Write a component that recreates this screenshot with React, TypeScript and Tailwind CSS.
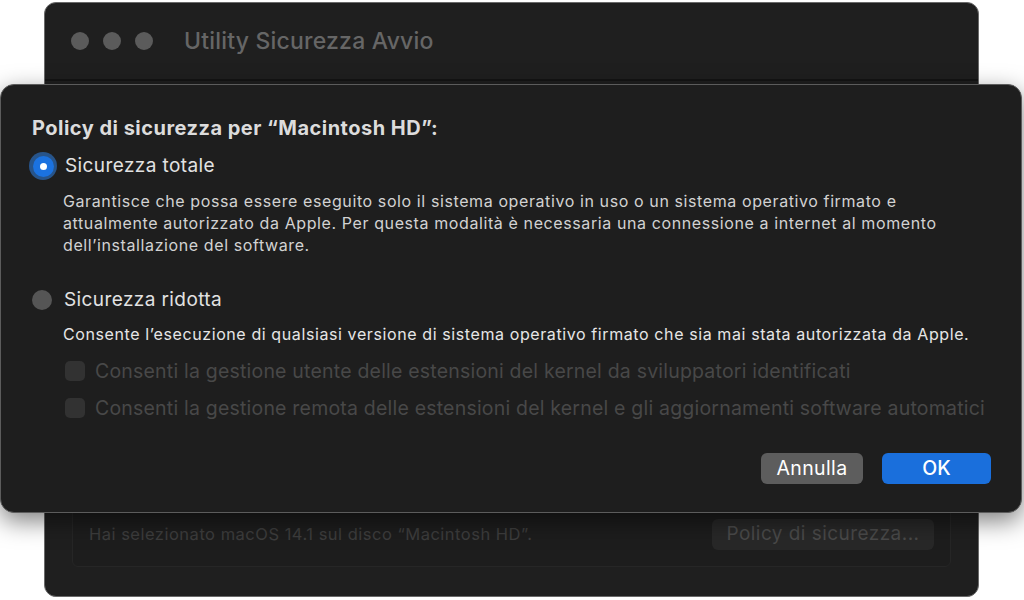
export default function App() {
  const font = { fontFamily: 'Inter, "Noto Sans", sans-serif' }
  return (
    <div className="relative w-[1024px] h-[600px] overflow-hidden bg-white" style={font}>
      {/* Background window */}
      <div className="ml-[44px] mt-[2px] w-[935px] h-[595px] rounded-[12px] border border-[#6a6a6a] bg-[#1f1f1f] flex flex-col">
        <div className="h-[78px] flex items-center pl-[26px] gap-[14px] border-b-2 border-[#141414]">
          <span className="w-[18px] h-[18px] rounded-full bg-[#5b5b5b]" />
          <span className="w-[18px] h-[18px] rounded-full bg-[#5b5b5b]" />
          <span className="w-[18px] h-[18px] rounded-full bg-[#5b5b5b]" />
          <span className="ml-[17px] text-[23px] font-medium text-[#666666] tracking-[0.2px]">
            Utility Sicurezza Avvio
          </span>
        </div>
        <div className="flex-1 flex flex-col justify-end px-[27px] pb-[29px]">
          <div className="h-[260px] rounded-[6px] border border-[#262626] bg-[#1d1d1d] flex items-end px-[16px] pb-[16px]">
            <div className="flex-1 flex items-center justify-between">
              <span className="text-[16.5px] text-[#3d3d3d] tracking-[0.5px]">
                Hai selezionato macOS 14.1 sul disco “Macintosh HD”.
              </span>
              <span className="h-[31px] w-[222px] rounded-[6px] bg-[#282828] flex items-center justify-center text-[19px] text-[#4a4a4a] tracking-[0.45px]">
                Policy di sicurezza...
              </span>
            </div>
          </div>
        </div>
      </div>

      {/* Sheet dialog */}
      <div className="absolute left-0 top-[84px] w-[1022px] h-[429px] rounded-[14px] border border-[#5c5c5c] bg-[#1e1e1e] shadow-[0_8px_24px_rgba(0,0,0,0.5)] flex flex-col pl-[31px] pr-[30px] pt-[30px]">
        <div className="text-[20px] font-bold text-[#dcdcdc] leading-[26px] tracking-[0.48px]">
          Policy di sicurezza per “Macintosh HD”:
        </div>

        <div className="mt-[11px] flex items-center gap-[8px] -ml-[3px]">
          <span className="w-[28px] h-[28px] rounded-full bg-[#27548a] flex items-center justify-center">
            <span className="w-[21px] h-[21px] rounded-full bg-[#1b72e0] flex items-center justify-center">
              <span className="w-[7px] h-[7px] rounded-full bg-white" />
            </span>
          </span>
          <span className="text-[19px] text-[#e2e2e2] tracking-[0.4px]">Sicurezza totale</span>
        </div>
        <p className="mt-[9px] ml-[31px] text-[16px] leading-[22px] text-[#d2d2d2] tracking-[0.6px]">
          Garantisce che possa essere eseguito solo il sistema operativo in uso o un sistema operativo firmato e
          <br />
          attualmente autorizzato da Apple. Per questa modalità è necessaria una connessione a internet al momento
          <br />
          dell’installazione del software.
        </p>

        <div className="mt-[30px] flex items-center gap-[12px]">
          <span className="w-[20px] h-[20px] rounded-full bg-[#555555]" />
          <span className="text-[19px] text-[#e2e2e2] tracking-[0.4px]">Sicurezza ridotta</span>
        </div>
        <p className="mt-[9px] ml-[31px] text-[16px] leading-[22px] text-[#e6e6e6] tracking-[0.6px]">
          Consente l’esecuzione di qualsiasi versione di sistema operativo firmato che sia mai stata autorizzata da Apple.
        </p>

        <div className="mt-[16px] ml-[33px] flex flex-col gap-[17px]">
          <div className="flex items-center gap-[10px]">
            <span className="w-[20px] h-[20px] rounded-[5px] bg-[#323232]" />
            <span className="text-[19.5px] leading-[20px] text-[#484848] tracking-[0.2px]">
              Consenti la gestione utente delle estensioni del kernel da sviluppatori identificati
            </span>
          </div>
          <div className="flex items-center gap-[10px]">
            <span className="w-[20px] h-[20px] rounded-[5px] bg-[#323232]" />
            <span className="text-[19.5px] leading-[20px] text-[#484848] tracking-[0.2px]">
              Consenti la gestione remota delle estensioni del kernel e gli aggiornamenti software automatici
            </span>
          </div>
        </div>

        <div className="mt-[35px] flex justify-end gap-[19px]">
          <button className="h-[31px] w-[102px] rounded-[6px] bg-[#5d5d5d] text-[19.5px] text-white tracking-[0.4px] flex items-center justify-center">
            Annulla
          </button>
          <button className="h-[31px] w-[109px] rounded-[6px] bg-[#1a6fdc] text-[19.5px] text-white font-medium flex items-center justify-center">
            OK
          </button>
        </div>
      </div>
    </div>
  )
}
